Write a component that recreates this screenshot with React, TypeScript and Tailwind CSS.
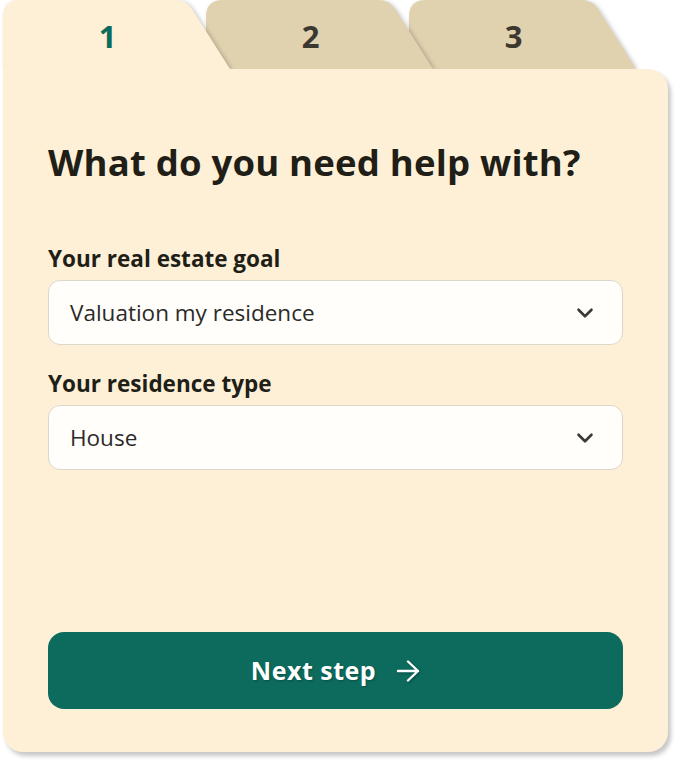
import { ChevronDown } from "lucide-react";

const tabs = ["1", "2", "3"];

const Tab = ({ label, index }: { label: string; index: number }) => {
  const active = index === 0;
  return (
    <div
      className={`relative w-[227px] h-[69px] shrink-0 flex items-center justify-center pr-[18px] ${
        index === 0 ? "z-30" : index === 1 ? "z-20 -ml-[24px]" : "z-10 -ml-[24px]"
      }`}
    >
      <svg
        className="absolute inset-0 drop-shadow-[2px_1px_2px_rgba(0,0,0,0.22)]"
        width="227"
        height="69"
        viewBox="0 0 227 69"
      >
        <path
          d="M0 69 V17 Q0 0 17 0 H172 Q183 0 189 9 L227 69 Z"
          fill={active ? "#fef0d6" : "#e0d1af"}
        />
      </svg>
      <span
        className={`relative text-[31px] font-bold leading-none mt-[3px] ${
          active ? "text-[#0b6b5c]" : "text-[#3b382f]"
        }`}
      >
        {label}
      </span>
    </div>
  );
};

const Select = ({ label, value }: { label: string; value: string }) => (
  <div className="flex flex-col">
    <label className="text-[22.5px] font-bold leading-[28px] text-[#201e17] mb-[7px]">
      {label}
    </label>
    <div className="h-[65px] rounded-[12px] border border-[#dcd6cb] bg-[#fffefb] flex items-center justify-between pl-[21px] pr-[24px]">
      <span className="text-[22.5px] text-[#2b2a27]">{value}</span>
      <ChevronDown size={26} strokeWidth={2.4} className="text-[#3a3935]" />
    </div>
  </div>
);

export default function App() {
  return (
    <div
      className="w-[678px] h-[762px] bg-white pl-[3px] overflow-hidden"
      style={{ fontFamily: '"Open Sans", "Noto Sans", sans-serif' }}
    >
      {/* Tabs */}
      <div className="flex h-[69px]">
        {tabs.map((t, i) => (
          <Tab key={t} label={t} index={i} />
        ))}
      </div>

      {/* Card */}
      <div className="relative z-40 w-[665px] h-[683px] bg-[#fef0d6] rounded-b-[20px] rounded-tr-[20px] shadow-[3px_4px_4px_rgba(0,0,0,0.22)] px-[45px] pt-[71px] pb-[43px] flex flex-col">
        <h1 className="text-[36.5px] font-bold leading-[44px] text-[#201e17] tracking-[0.2px]">
          What do you need help with?
        </h1>

        <div className="mt-[61px] flex flex-col gap-[25px]">
          <Select label="Your real estate goal" value="Valuation my residence" />
          <Select label="Your residence type" value="House" />
        </div>

        <button className="mt-auto h-[77px] w-full rounded-[16px] bg-[#0c6b5d] flex items-center justify-center gap-[20px] text-white">
          <span className="text-[25px] font-bold tracking-[0.5px] [text-shadow:1px_1px_2px_rgba(0,0,0,0.25)]">
            Next step
          </span>
          <svg
            width="24"
            height="22"
            viewBox="0 0 24 22"
            fill="none"
            stroke="white"
            strokeWidth="2.4"
            strokeLinecap="round"
            strokeLinejoin="round"
            className="drop-shadow-[1px_1px_1px_rgba(0,0,0,0.3)]"
          >
            <path d="M2 11 H22 M12 1.5 L22 11 L12 20.5" />
          </svg>
        </button>
      </div>
    </div>
  );
}
